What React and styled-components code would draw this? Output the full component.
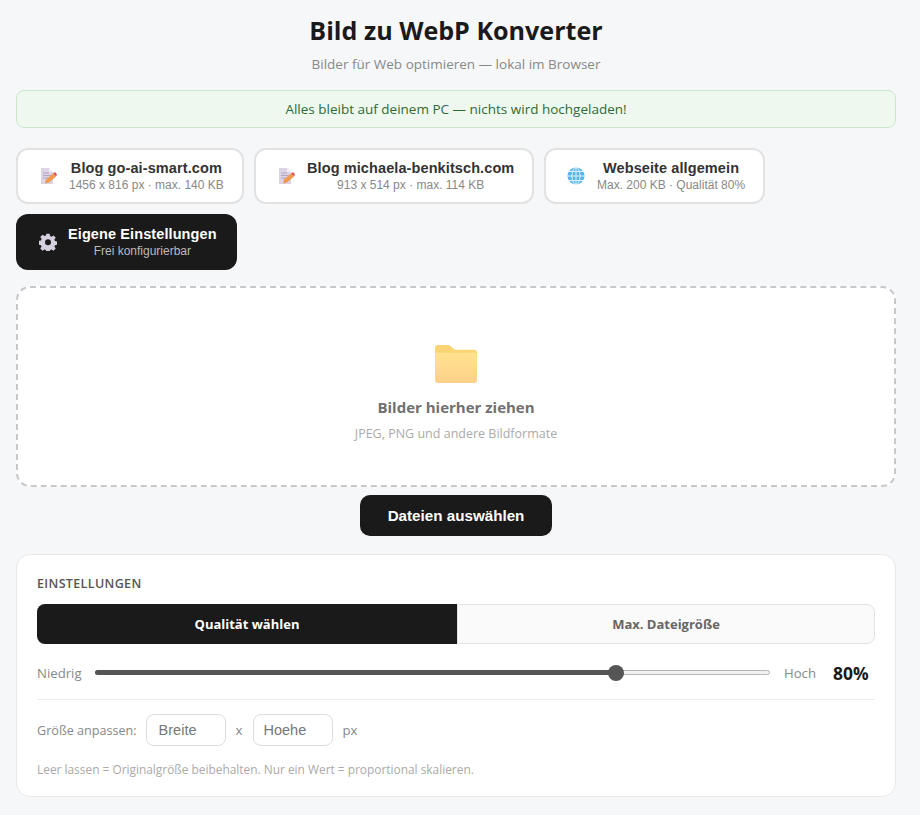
import React from 'react';
import styled, { createGlobalStyle } from 'styled-components';

const Global = createGlobalStyle`
  html, body { margin: 0; padding: 0; background: #f6f7f9; }
  body { font-family: "Open Sans", "Noto Sans", sans-serif; color: #1a1a1a; }
  * { box-sizing: border-box; }
`;

const Page = styled.div`
  width: 880px;
  margin-left: 16px;
  padding-top: 13px;
  height: 815px;
  overflow: hidden;
`;
const Title = styled.h1`
  margin: 0;
  height: 34px;
  line-height: 34px;
  font-size: 25.1px;
  font-weight: 700;
  text-align: center;
  color: #1a1a1a;
`;
const Subtitle = styled.p`
  margin: 8px 0 0;
  height: 18px;
  line-height: 18px;
  font-size: 13.5px;
  text-align: center;
  color: #888;
`;
const Banner = styled.div`
  margin-top: 17px;
  height: 38px;
  line-height: 36px;
  background: #eff8ef;
  border: 1px solid #cbe6cd;
  border-radius: 8px;
  font-size: 13.5px;
  text-align: center;
  color: #2e6b34;
`;
const Presets = styled.div`
  margin-top: 20px;
  display: flex;
  flex-wrap: wrap;
  gap: 10px;
`;
const Preset = styled.div`
  width: ${(p) => p.$w}px;
  height: 56px;
  display: flex;
  align-items: center;
  padding-left: ${(p) => p.$pad || 21}px;
  gap: ${(p) => p.$gap || 12}px;
  border-radius: 12px;
  border: ${(p) => (p.$dark ? 'none' : '2px solid #e2e2e2')};
  background: ${(p) => (p.$dark ? '#1a1a1a' : '#fff')};
  font-family: "Liberation Sans", Arial, sans-serif;
`;
const PresetIcon = styled.svg`
  width: 18px;
  height: 18px;
  flex: none;
`;
const PresetText = styled.div`
  text-align: center;
  white-space: nowrap;
`;
const PresetName = styled.div`
  font-size: 14.5px;
  letter-spacing: 0.1px;
  line-height: 17px;
  font-weight: 700;
  color: ${(p) => (p.$dark ? '#fff' : '#333')};
`;
const PresetSub = styled.div`
  font-size: 12px;
  line-height: 15px;
  margin-top: 1px;
  color: ${(p) => (p.$dark ? '#bbb' : '#888')};
`;
const Drop = styled.div`
  margin-top: 16px;
  height: 201px;
  background: #fff;
  border: 2px dashed #c8c8cc;
  border-radius: 14px;
  display: flex;
  flex-direction: column;
  align-items: center;
  padding-top: 56px;
`;
const Folder = styled.svg`
  width: 44px;
  height: 39px;
`;
const DropTitle = styled.div`
  margin-top: 13px;
  height: 22px;
  line-height: 22px;
  font-size: 15px;
  font-weight: 700;
  color: #707070;
`;
const DropSub = styled.div`
  margin-top: 7px;
  line-height: 18px;
  font-size: 12.5px;
  color: #aaa;
`;
const PickRow = styled.div`
  margin-top: 8px;
  display: flex;
  justify-content: center;
`;
const PickButton = styled.button`
  width: 192px;
  height: 41px;
  border: none;
  border-radius: 10px;
  background: #1a1a1a;
  color: #fff;
  font-family: "Liberation Sans", Arial, sans-serif;
  font-size: 15.2px;
  font-weight: 700;
`;
const Panel = styled.section`
  margin-top: 18px;
  height: 243px;
  background: #fff;
  border: 1px solid #e8e8e8;
  border-radius: 14px;
  padding: 20px 20px 0;
`;
const Heading = styled.div`
  height: 18px;
  line-height: 18px;
  font-size: 12.5px;
  font-weight: 600;
  letter-spacing: 0.35px;
  color: #555;
`;
const Tabs = styled.div`
  margin-top: 11px;
  height: 40px;
  display: flex;
`;
const Tab = styled.div`
  flex: ${(p) => (p.$active ? '0 0 420px' : '1')};
  line-height: ${(p) => (p.$active ? '40px' : '38px')};
  text-align: center;
  font-size: 13px;
  font-weight: 700;
  background: ${(p) => (p.$active ? '#1a1a1a' : '#fafafa')};
  color: ${(p) => (p.$active ? '#fff' : '#666')};
  border: ${(p) => (p.$active ? 'none' : '1px solid #e2e2e2')};
  border-radius: ${(p) => (p.$active ? '8px 0 0 8px' : '0 8px 8px 0')};
`;
const SliderRow = styled.div`
  margin-top: 16px;
  height: 26px;
  display: flex;
  align-items: center;
`;
const SideLabel = styled.span`
  font-size: ${(p) => p.$size || 13.2}px;
  color: #888;
`;
const Track = styled.div`
  position: relative;
  margin: -2px 14px 0 13px;
  flex: 1;
  height: 5px;
  background: #f1f1f1;
  border: 1px solid #b5b5b5;
  border-radius: 3px;
`;
const Fill = styled.div`
  height: 5px;
  margin: -1px;
  background: #555;
  border-radius: 3px;
`;
const Thumb = styled.div`
  position: absolute;
  top: -6px;
  width: 16px;
  height: 16px;
  margin-left: -8px;
  border-radius: 50%;
  background: #555;
`;
const Percent = styled.span`
  margin-left: 17px;
  width: 42px;
  font-size: 17.4px;
  font-weight: 700;
  color: #1a1a1a;
`;
const Divider = styled.div`
  margin-top: 13px;
  border-top: 1px solid #ececec;
`;
const SizeRow = styled.div`
  margin-top: 14px;
  height: 32px;
  display: flex;
  align-items: center;
`;
const SizeInput = styled.input`
  width: 80px;
  height: 32px;
  padding: 0 ${(p) => p.$pad}px;
  margin: 0 10px 0 ${(p) => p.$before}px;
  border: 1px solid #ddd;
  border-radius: 8px;
  background: #fff;
  font-family: "Liberation Sans", Arial, sans-serif;
  font-size: 14.5px;
  &::placeholder { color: #777; opacity: 1; }
`;
const Hint = styled.div`
  margin-top: 15px;
  line-height: 16px;
  font-size: 11.9px;
  color: #aaa;
`;

const DocIcon = () => (
  <PresetIcon viewBox="0 0 18 18">
    <path d="M2 1h8l4 4v12H2z" fill="#dcd3e4" />
    <path d="M10 1l4 4h-4z" fill="#f2eef6" />
    <path d="M4 6h6M4 8.500h8M4 11h5" stroke="#b3a5c4" strokeWidth="1" />
    <path d="M6 16.500l1-4 7-6 3 3-7 6z" fill="#ef9a4e" />
    <path d="M14 6.500l2-1.500 2 2.500-1 2z" fill="#e8505b" />
  </PresetIcon>
);

const GlobeIcon = () => (
  <PresetIcon viewBox="0 0 18 18">
    <circle cx="9" cy="9" r="8.500" fill="#55b4ea" />
    <g fill="none" stroke="#dff2fc" strokeWidth="1">
      <ellipse cx="9" cy="9" rx="4" ry="8.500" />
      <path d="M9 .5v17M.5 9h17M2 4.500h14M2 13.500h14" />
    </g>
  </PresetIcon>
);

const GearIcon = () => (
  <PresetIcon viewBox="0 0 18 18">
    <path
      fill="#d6cfe0"
      fillRule="evenodd"
      d="M7.400 .8h3.200l.5 2.300 1.400.6 2-1.300 2.200 2.200-1.300 2 .6 1.400 2.300.5v3.200l-2.300.5-.6 1.400 1.300 2-2.200 2.200-2-1.300-1.400.6-.5 2.300H7.400l-.5-2.300-1.400-.6-2 1.300-2.200-2.200 1.300-2-.6-1.400-2.300-.5V7.900l2.300-.5.6-1.400-1.300-2 2.200-2.200 2 1.300 1.400-.6zM9 6.300a3 3 0 1 0 0 6 3 3 0 0 0 0-6z"
    />
  </PresetIcon>
);

const presets = [
  { w: 228, icon: <DocIcon />, name: 'Blog go-ai-smart.com', sub: '1456 x 816 px · max. 140 KB' },
  { w: 280, icon: <DocIcon />, name: 'Blog michaela-benkitsch.com', sub: '913 x 514 px · max. 114 KB' },
  { w: 221, icon: <GlobeIcon />, name: 'Webseite allgemein', sub: 'Max. 200 KB · Qualität 80%' },
];

export default function App() {
  return (
    <>
      <Global />
      <Page>
        <Title>Bild zu WebP Konverter</Title>
        <Subtitle>Bilder für Web optimieren — lokal im Browser</Subtitle>
        <Banner>Alles bleibt auf deinem PC — nichts wird hochgeladen!</Banner>
        <Presets>
          {presets.map((p) => (
            <Preset key={p.name} $w={p.w}>
              {p.icon}
              <PresetText>
                <PresetName>{p.name}</PresetName>
                <PresetSub>{p.sub}</PresetSub>
              </PresetText>
            </Preset>
          ))}
          <Preset $dark $w={221} $pad={23} $gap={11}>
            <GearIcon />
            <PresetText>
              <PresetName $dark>Eigene Einstellungen</PresetName>
              <PresetSub $dark>Frei konfigurierbar</PresetSub>
            </PresetText>
          </Preset>
        </Presets>
        <Drop>
          <Folder viewBox="0 0 44 40" preserveAspectRatio="none">
            <defs>
              <linearGradient id="folderFront" x1="0" y1="0" x2="0" y2="1">
                <stop offset="0" stopColor="#ffe38f" />
                <stop offset="1" stopColor="#fdd08a" />
              </linearGradient>
            </defs>
            <path d="M1 4a3 3 0 0 1 3-3h11l6 5h19a3 3 0 0 1 3 3v4H1z" fill="#fbd476" />
            <path d="M1 9h40a2 2 0 0 1 2 2v26a3 3 0 0 1-3 3H4a3 3 0 0 1-3-3z" fill="url(#folderFront)" />
          </Folder>
          <DropTitle>Bilder hierher ziehen</DropTitle>
          <DropSub>JPEG, PNG und andere Bildformate</DropSub>
        </Drop>
        <PickRow>
          <PickButton>Dateien auswählen</PickButton>
        </PickRow>
        <Panel>
          <Heading>EINSTELLUNGEN</Heading>
          <Tabs>
            <Tab $active>Qualität wählen</Tab>
            <Tab>Max. Dateigröße</Tab>
          </Tabs>
          <SliderRow>
            <SideLabel>Niedrig</SideLabel>
            <Track>
              <Fill style={{ width: '521px' }} />
              <Thumb style={{ left: '520px' }} />
            </Track>
            <SideLabel>Hoch</SideLabel>
            <Percent>80%</Percent>
          </SliderRow>
          <Divider />
          <SizeRow>
            <SideLabel $size={12.6}>Größe anpassen:</SideLabel>
            <SizeInput placeholder="Breite" $before={9} $pad={12} />
            <SideLabel>x</SideLabel>
            <SizeInput placeholder="Hoehe" $before={10} $pad={10} />
            <SideLabel>px</SideLabel>
          </SizeRow>
          <Hint>Leer lassen = Originalgröße beibehalten. Nur ein Wert = proportional skalieren.</Hint>
        </Panel>
      </Page>
    </>
  );
}
